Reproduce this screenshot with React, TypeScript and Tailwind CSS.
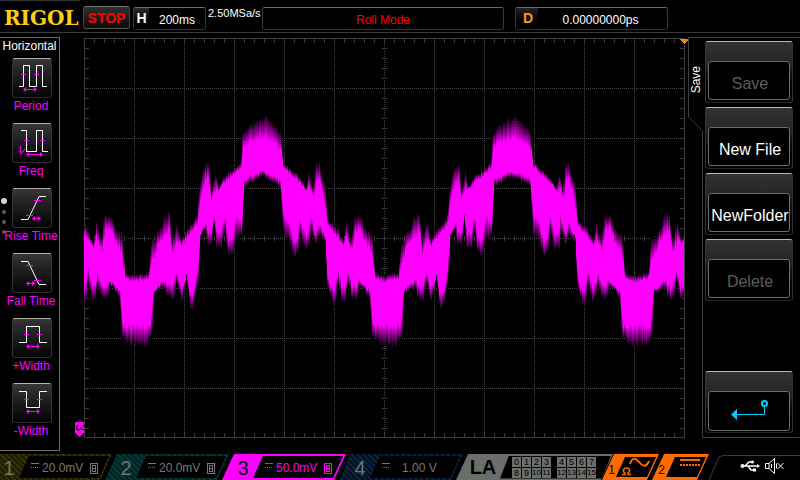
import React from "react";

type Pt = [number, number];

const PERIOD = 250;

// Envelope control points over one period, in thirds of a pixel.
const OUTER_TOP: Pt[] = [[12,375],[20,385],[40,432],[48,370],[62,430],[72,350],[92,352],[105,395],[125,405],[135,525],[170,528],[205,520],[212,430],[240,390],[252,350],[268,345],[275,430],[290,372],[302,425],[320,390],[350,355],[358,260],[372,200],[386,194],[393,280],[405,218],[415,265],[432,232],[460,210],[482,190],[486,110],[500,92],[525,68],[560,56],[580,76],[600,96],[608,190],[650,225],[678,265],[686,218],[697,275],[706,194],[718,198],[725,240],[735,250],[742,365],[762,375]];
const INNER_TOP: Pt[] = [[12,400],[40,440],[48,410],[65,455],[75,390],[90,385],[105,430],[122,450],[135,535],[160,545],[205,535],[212,490],[235,430],[255,400],[268,390],[276,460],[292,420],[303,435],[352,370],[360,300],[375,240],[384,235],[392,300],[405,265],[415,270],[435,245],[482,205],[490,140],[510,125],[550,110],[590,130],[603,150],[608,200],[650,240],[682,275],[688,255],[700,300],[708,240],[718,240],[730,290],[742,375],[762,400]];
const INNER_BOTTOM: Pt[] = [[12,570],[18,540],[24,510],[34,560],[45,560],[52,515],[65,560],[78,560],[85,540],[120,575],[128,680],[210,680],[220,570],[255,540],[262,560],[275,560],[288,515],[300,560],[310,560],[320,515],[326,580],[340,580],[352,500],[360,400],[378,370],[382,400],[392,400],[402,345],[410,400],[422,400],[434,345],[442,420],[455,420],[467,350],[484,370],[492,240],[520,225],[545,215],[570,225],[600,240],[610,350],[628,370],[638,420],[650,420],[658,350],[672,400],[685,400],[690,350],[705,400],[715,370],[735,410],[740,510],[750,560],[762,570]];
const OUTER_BOTTOM: Pt[] = [[12,620],[18,590],[22,540],[35,600],[45,600],[50,545],[65,590],[82,595],[88,550],[118,590],[125,705],[150,730],[200,730],[215,705],[222,575],[255,560],[260,590],[280,595],[288,540],[303,602],[318,530],[330,622],[338,617],[355,530],[360,410],[374,380],[380,432],[392,432],[402,365],[408,438],[424,438],[434,375],[440,455],[456,462],[470,410],[485,400],[492,258],[545,226],[600,258],[608,400],[628,420],[640,465],[655,450],[660,390],[670,440],[688,440],[692,390],[705,432],[715,400],[735,420],[740,550],[762,620]];

function sample(points: Pt[], column: number): number {
  const u = 12 + (column % PERIOD) * 3;
  for (let i = 1; i < points.length; i++) {
    const [x0, y0] = points[i - 1];
    const [x1, y1] = points[i];
    if (u <= x1) return 62 + (y0 + ((y1 - y0) * (u - x0)) / (x1 - x0)) / 3;
  }
  return 62 + points[points.length - 1][1] / 3;
}

function noise(n: number): number {
  const s = Math.sin(n * 127.1 + 311.7) * 43758.5453;
  return (s - Math.floor(s)) * 2 - 1;
}

function layerPath(t: number): string {
  const top: string[] = [];
  const bottom: string[] = [];
  for (let x = 0; x < 600; x++) {
    const ot = sample(OUTER_TOP, x);
    const it = sample(INNER_TOP, x);
    const ob = sample(OUTER_BOTTOM, x);
    const ib = sample(INNER_BOTTOM, x);
    const jt = noise(x) * Math.min(3, 1 + Math.abs(it - ot) * 0.15);
    const jb = noise(x + 900) * Math.min(3, 1 + Math.abs(ob - ib) * 0.15);
    const yt = Math.round(ot + (it - ot) * t + jt);
    const yb = Math.round(ob + (ib - ob) * t + jb);
    top.push(`L${x} ${yt}L${x + 1} ${yt}`);
    bottom.unshift(`L${x + 1} ${yb}L${x} ${yb}`);
  }
  return "M" + top.join("").slice(1) + bottom.join("") + "Z";
}

const LAYERS = [
  { t: -0.05, fill: "#260026" },
  { t: 0.1, fill: "#480048" },
  { t: 0.28, fill: "#6c006c" },
  { t: 0.46, fill: "#8e008e" },
  { t: 0.64, fill: "#b000b0" },
  { t: 0.82, fill: "#d400d4" },
  { t: 1, fill: "#ff00ff" },
].map((l) => ({ fill: l.fill, d: layerPath(l.t) }));

function ticks(): string {
  let d = "";
  for (let x = 10; x < 600; x += 10) d += `M${x}.5 0v5M${x}.5 395v5M${x}.5 198v5`;
  for (let y = 10; y < 400; y += 10) d += `M0 ${y}.5h5M596 ${y}.5h5M298 ${y}.5h5`;
  return d;
}

function gridLines(): string {
  let d = "";
  for (let x = 50; x < 600; x += 50) d += `M${x}.5 0V400`;
  for (let y = 50; y < 400; y += 50) d += `M0 ${y}.5H600`;
  return d;
}

function Graticule() {
  return (
    <svg className="block h-full w-full overflow-visible" viewBox="0 0 600 400" preserveAspectRatio="none" shapeRendering="crispEdges" role="img" aria-label="Channel 3 waveform">
      <path d={gridLines()} stroke="#474747" strokeDasharray="1 1" fill="none" />
      <path d={ticks()} stroke="#3c3c3c" fill="none" />
      <rect x="0.5" y="0.5" width="600" height="399" fill="none" stroke="#3c3c3c" />
      {LAYERS.map((l) => (
        <path key={l.fill} d={l.d} fill={l.fill} />
      ))}
      <path d="M596 1h9l-4.500 5z" fill="#ff8000" />
    </svg>
  );
}

function Arrow({ x1, x2, y }: { x1: number; x2: number; y: number }) {
  return (
    <>
      <path d={`M${x1 + 1} ${y + 0.5}H${x2}`} stroke="#ff00ff" />
      <path d={`M${x1} ${y + 0.5}l3 -2.500v5zM${x2 + 1} ${y + 0.5}l-3 -2.500v5z`} fill="#ff00ff" />
    </>
  );
}

interface Measure {
  label: string;
  wave: string;
  marks: string;
  arrow: [number, number, number];
  inverse?: boolean;
}

const MEASURES: Measure[] = [
  { label: "Period", wave: "M7 28.500H11.500V7.500H17.500V28.500H24.500V7.500H30.500V28.500H35", marks: "M9 16.500h5M22 16.500h5", arrow: [11, 24, 31] },
  { label: "Freq", wave: "M9 7.500H14.500V28.500H24.500V7.500H30.500V28.500H36", marks: "M12 17.500h5M28 17.500h5", arrow: [14, 30, 31], inverse: true },
  { label: "Rise Time", wave: "M9 31.500H16L27 8.500H34", marks: "M14 27.500h7M22 12.500h7", arrow: [20, 28, 30] },
  { label: "Fall Time", wave: "M9 8.500H16L27 31.500H34", marks: "M14 12.500h7M22 27.500h7", arrow: [14, 22, 30] },
  { label: "+Width", wave: "M7 24.500H14.500V8.500H27.500V24.500H35", marks: "M12 16.500h5M25 16.500h5", arrow: [14, 27, 28] },
  { label: "-Width", wave: "M7 8.500H14.500V24.500H27.500V8.500H35", marks: "M12 16.500h5M25 16.500h5", arrow: [14, 27, 28] },
];

function MeasureButton({ m }: { m: Measure }) {
  return (
    <button type="button" className="flex h-[65px] w-full flex-col items-center pl-[3px] text-[#ff00ff]">
      <span className="ml-[2px] block h-10 w-10 rounded-[3px] border border-t-[#b0b0b0] border-x-[#333] border-b-[#2a2a2a] bg-linear-to-b from-[#363636] to-[#050505]">
        <svg className="-m-px block h-10 w-10" viewBox="0 0 40 40" fill="none">
          <path d={m.wave} stroke="#fff" />
          <path d={m.marks} stroke="#ff00ff" />
          <Arrow x1={m.arrow[0]} x2={m.arrow[1]} y={m.arrow[2]} />
          {m.inverse && <path d="M7 24.500l1.500 -1.500v6M6.500 29h4M8 32l5 -6" stroke="#ff00ff" />}
        </svg>
      </span>
      <span className="text-[12px] leading-4 whitespace-nowrap">{m.label}</span>
    </button>
  );
}

function SoftKey({ label, disabled, children }: { label: string; disabled?: boolean; children?: React.ReactNode }) {
  return (
    <button
      type="button"
      aria-label={label}
      disabled={disabled}
      className="flex h-[62px] w-[88px] shrink-0 flex-col rounded-[3px] border border-t-[#b8b8b8] border-x-[#333] border-b-[#242424] bg-linear-to-b from-[#323232] via-[#262626] via-35% to-black px-[2px] pt-[19px] pb-[2px] text-white disabled:text-[#5c5c5c]"
    >
      <span className="flex w-full flex-1 items-center justify-center rounded-[3px] border border-[#6a6e6a] bg-black pt-[6px] pl-[2px] text-[16px] leading-5 whitespace-nowrap">
        {children ?? label}
      </span>
    </button>
  );
}

interface Channel {
  id: number;
  scale: string;
  bw: boolean;
  body: string;
  text: string;
  digit: string;
}

const CHANNELS: Channel[] = [
  { id: 1, scale: "20.0mV", bw: true, body: "bg-[repeating-linear-gradient(45deg,#1c1c08_0_2px,#333300_2px_4px)]", text: "text-[#777]", digit: "text-[#77775c]" },
  { id: 2, scale: "20.0mV", bw: true, body: "bg-[repeating-linear-gradient(45deg,#002424_0_2px,#073838_2px_4px)]", text: "text-[#777]", digit: "text-[#6c7474]" },
  { id: 3, scale: "50.0mV", bw: true, body: "bg-[#ff00ff]", text: "text-[#ff00ff]", digit: "text-black" },
  { id: 4, scale: "1.00 V", bw: false, body: "bg-[repeating-linear-gradient(45deg,#02101f_0_2px,#0a2440_2px_4px)]", text: "text-[#777]", digit: "text-[#6c7480]" },
];

function ChannelTab({ c }: { c: Channel }) {
  return (
    <button
      type="button"
      aria-label={`Channel ${c.id}`}
      className={`-ml-[7px] flex h-[26px] w-[124px] shrink-0 items-center pr-[3px] first:-ml-[12px] [clip-path:polygon(12px_0,100%_0,calc(100%-12px)_100%,0_100%)] ${c.body}`}
    >
      <span className={`w-[31px] shrink-0 pt-[2px] pl-[11px] text-center text-[20px] leading-6 ${c.digit}`}>{c.id}</span>
      <span className={`flex h-[22px] flex-1 items-center bg-black pt-[2px] pl-[12px] text-[12px] leading-4 [clip-path:polygon(10px_0,100%_0,calc(100%-10px)_100%,0_100%)] ${c.text}`}>
        <svg className="mr-[3px] mb-[4px] h-[6px] w-[8px]" viewBox="0 0 8 6" shapeRendering="crispEdges">
          <path d="M0 0.500h8" stroke="currentColor" />
          <path d="M0 4.500h8" stroke="currentColor" strokeDasharray="1 1" />
        </svg>
        <span className={c.bw ? "w-[48px] text-left whitespace-nowrap" : "w-[60px] pl-[9px] text-left whitespace-nowrap"}>{c.scale}</span>
        {c.bw && (
          <svg className="h-[11px] w-[8px]" viewBox="0 0 8 11" fill="none" stroke="currentColor" shapeRendering="crispEdges">
            <path d="M0.500 0.500h7v10h-7zM2.500 2.500h3v6h-3zM2.500 5.500h3" />
          </svg>
        )}
      </span>
    </button>
  );
}

function BitGroup({ bits }: { bits: number[] }) {
  return (
    <span className="grid grid-cols-[repeat(4,9px)] gap-px">
      {bits.map((b) => (
        <span key={b} className={`flex h-[10px] w-[9px] items-center justify-center bg-[#6b6f6b] leading-[10px] text-black ${b > 9 ? "text-[8px]" : "text-[9px]"}`}>
          {b}
        </span>
      ))}
    </span>
  );
}

const SLANT = "[clip-path:polygon(12px_0,100%_0,calc(100%-12px)_100%,0_100%)]";
const SLANT_INNER = "[clip-path:polygon(9px_0,100%_0,calc(100%-9px)_100%,0_100%)]";

function SourceTab({ id, className, children }: { id: number; className: string; children: React.ReactNode }) {
  return (
    <button type="button" aria-label={`Source ${id}`} className={`flex h-[26px] w-[57px] shrink-0 items-center bg-[#ff6a00] pr-[3px] text-black ${SLANT} ${className}`}>
      <span className="w-[14px] shrink-0 pt-[6px] pl-[5px] text-center text-[12px] leading-4">{id}</span>
      <span className={`block h-[20px] flex-1 bg-black ${SLANT_INNER}`}>{children}</span>
    </button>
  );
}

const READOUT = "flex h-[23px] items-center rounded-[3px] border border-t-[#6c6c6c] border-x-[#383838] border-b-[#303030] bg-black";

export default function App() {
  return (
    <div className="flex h-screen w-full flex-col overflow-hidden bg-black font-['Liberation_Sans',Arial,sans-serif] text-white select-none">
      <header className="flex h-[33px] shrink-0 items-start border-b border-[#3a3a3a]">
        <div className="w-20 shrink-0 border-t border-[#333] pt-[5px] pl-[4px] font-['DejaVu_Serif',serif] text-[20px] leading-6 font-bold text-[#ffcc10]">RIGOL</div>
        <button type="button" className="mt-[6px] ml-[3px] flex h-[23px] w-[47px] shrink-0 items-center justify-center rounded-[3px] border border-t-[#707070] border-x-[#444] border-b-[#555] bg-linear-to-b from-[#303030] to-[#0a0a0a] text-[14px] leading-4 font-bold text-[#ff0000]">
          STOP
        </button>
        <div className={`${READOUT} mt-[7px] ml-[3px] w-[73px] shrink-0`}>
          <span className="flex h-full w-[15px] items-center justify-center bg-linear-to-b from-[#2c2c2c] to-black pb-[2px] text-[14px] leading-4 font-bold">H</span>
          <span className="flex-1 pt-[2px] text-center text-[12px] leading-4">200ms</span>
        </div>
        <span className="mt-[5px] ml-[2px] w-[54px] shrink-0 text-[11px] leading-4">2.50MSa/s</span>
        <div className={`${READOUT} mt-[7px] flex-1 justify-center pt-[2px] text-[12px] leading-4 text-[#ff0000]`}>Roll Mode</div>
        <div className={`${READOUT} mt-[7px] mr-[132px] ml-[11px] w-[153px] shrink-0`}>
          <span className="flex h-full w-[22px] items-center justify-center bg-linear-to-b from-[#242424] to-black pb-[2px] pl-[2px] text-[14px] leading-4 font-bold text-[#ff9900]">D</span>
          <span className="flex-1 pt-[2px] pr-[4px] text-center text-[12px] leading-4">0.00000000ps</span>
        </div>
      </header>

      <main className="flex min-h-0 flex-1">
        <nav className="relative mt-[4px] mb-[3px] w-[60px] shrink-0 border-y border-r border-[#6a6a6a]">
          <h2 className="h-5 text-center text-[12px] leading-4">Horizontal</h2>
          {MEASURES.map((m) => (
            <MeasureButton key={m.label} m={m} />
          ))}
          <div className="absolute top-[160px] left-px flex flex-col items-center gap-[6px]">
            <i className="h-[6px] w-[6px] rounded-full bg-[#d8d8d8]" />
            <i className="h-[4px] w-[4px] rounded-full bg-[#5a5a5a]" />
            <i className="h-[4px] w-[4px] rounded-full bg-[#5a5a5a]" />
            <i className="h-[4px] w-[4px] rounded-full bg-[#5a5a5a]" />
          </div>
        </nav>

        <div className="mt-[5px] mb-[16px] flex w-6 shrink-0 items-end justify-end">
          <span className="mb-px flex h-[15px] w-[9px] items-start justify-center bg-[#ff00ff] text-[12px] leading-[11px] text-black [clip-path:polygon(0_0,100%_0,100%_72%,50%_100%,0_72%)]">
            <span className="block rotate-90">3</span>
          </span>
        </div>

        <section className="mt-[5px] mb-[16px] min-w-0 flex-1">
          <Graticule />
        </section>

        <aside className="mt-[4px] mb-[16px] flex w-[116px] shrink-0 pl-[4px]">
          <div className="flex w-[15px] flex-col">
            <div className="flex h-[80px] items-center justify-center border-t border-l border-[#3c3c3c] pt-[4px]">
              <span className="rotate-180 text-[12px] leading-[14px] [writing-mode:vertical-rl]">Save</span>
            </div>
            <svg className="block h-[14px] w-[15px]" viewBox="0 0 15 14">
              <path d="M0.500 0L14.500 14" stroke="#3c3c3c" />
            </svg>
            <div className="flex-1 border-r border-[#3c3c3c]" />
          </div>
          <div className="flex flex-1 flex-col gap-[4px] border-y border-[#3c3c3c] pt-[3px] pb-[4px] pl-[2px]">
            <SoftKey label="Save" disabled />
            <SoftKey label="New File" />
            <SoftKey label="NewFolder" />
            <SoftKey label="Delete" disabled />
            <div className="flex-1" />
            <SoftKey label="Back">
              <svg className="-mt-[6px] -ml-[2px] h-[38px] w-[80px]" viewBox="0 0 80 38" fill="none">
                <path d="M28 22.500H55.500V14" stroke="#00d0ff" />
                <circle cx="55.500" cy="11.500" r="2.500" stroke="#00d0ff" strokeWidth="2" />
                <path d="M22 22.500l6 -5.500v11z" fill="#00d0ff" />
              </svg>
            </SoftKey>
          </div>
        </aside>
      </main>

      <footer className="flex h-[26px] shrink-0">
        <div className="flex">
          {CHANNELS.map((c) => (
            <ChannelTab key={c.id} c={c} />
          ))}
        </div>
        <button type="button" aria-label="Logic analyzer" className={`-ml-[7px] flex h-[26px] w-[157px] shrink-0 items-center bg-[#6b6f6b] pr-[2px] ${SLANT}`}>
          <span className="w-[44px] shrink-0 pl-[10px] text-center text-[20px] leading-6 font-bold text-black">LA</span>
          <span className={`flex h-[23px] flex-1 items-center gap-[6px] bg-black pl-[12px] ${SLANT_INNER}`}>
            <BitGroup bits={[0, 1, 2, 3, 8, 9, 10, 11]} />
            <BitGroup bits={[4, 5, 6, 7, 12, 13, 14, 15]} />
          </span>
        </button>
        <SourceTab id={1} className="-ml-[11px]">
          <svg className="block h-[20px] w-[40px]" viewBox="0 0 40 20" fill="none" stroke="#ff6a00">
            <path d="M14 7C16 0 20 1 23 5S30 11 33 4" strokeWidth="2" />
            <path d="M6 17.500h3v-1.500c-3 -2 -1.500 -5 1.500 -5s4.500 3 1.500 5v1.500h3" strokeWidth="1.500" />
          </svg>
        </SourceTab>
        <SourceTab id={2} className="-ml-[7px]">
          <svg className="block h-[20px] w-[40px]" viewBox="0 0 40 20" fill="none" stroke="#ff6a00" shapeRendering="crispEdges">
            <path d="M14 3H34" strokeWidth="2" />
            <path d="M14 8H34" strokeWidth="2" strokeDasharray="2 1" />
          </svg>
        </SourceTab>
        <div className="flex min-w-0 flex-1">
          <svg className="block h-[26px] w-[14px] shrink-0" viewBox="0 0 14 26">
            <path d="M0 26L10 3L14 1.500" stroke="#3c3c3c" fill="none" />
          </svg>
          <div className="mt-px flex flex-1 items-center justify-end gap-[5px] border-t border-[#3c3c3c] pr-[15px] pb-[4px]">
            <svg className="h-[12px] w-[20px]" viewBox="0 0 20 12" fill="none" stroke="#fff">
              <path d="M2 6H18M5 6L9 2H12M8 6L11 10H14" strokeWidth="1.500" />
              <circle cx="2.500" cy="6" r="2" fill="#fff" stroke="none" />
              <circle cx="12.500" cy="2" r="1.500" fill="#fff" stroke="none" />
              <path d="M13 8.500h3v3h-3zM17 4l3 2l-3 2z" fill="#fff" stroke="none" />
            </svg>
            <svg className="h-[16px] w-[20px]" viewBox="0 0 20 16" fill="none" stroke="#fff">
              <path d="M0.500 5.500H4L9.500 0.500V15.500L4 10.500H0.500ZM4 5.500V10.500M6.500 6V10M11.500 5.500V10.500M12.500 5L18.500 11M12.500 11L18.500 5" />
            </svg>
          </div>
        </div>
      </footer>
    </div>
  );
}
